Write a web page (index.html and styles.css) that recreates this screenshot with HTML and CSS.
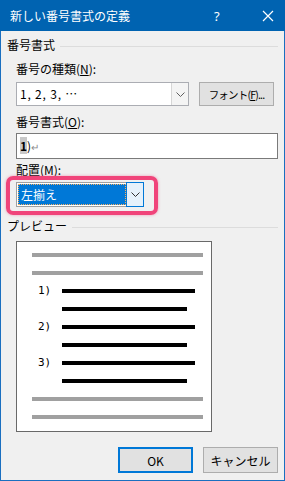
FILE: index.html
```html
<!DOCTYPE html>
<html lang="ja">
<head>
    <meta charset="UTF-8">
    <meta name="viewport" content="width=device-width, initial-scale=1.0">
    <title>新しい番号書式の定義</title>
    <link rel="stylesheet" href="styles.css">
</head>
<body>
<div class="window">
    <div class="titlebar">
        <span class="title">新しい番号書式の定義</span>
        <span class="help">?</span>
        <span class="close">
            <svg width="12" height="12" viewBox="0 0 12 12"><path d="M1 1 L11 11 M11 1 L1 11" stroke="#fff" stroke-width="1.2" fill="none"/></svg>
        </span>
    </div>

    <div class="content">
        <div class="group-head"><span>番号書式</span><i class="rule"></i></div>

        <div class="label">番号の種類(<u>N</u>):</div>
        <div class="row">
            <div class="combo">
                <span class="combo-text">1, 2, 3, …</span>
                <span class="combo-btn">
                    <svg width="9" height="5" viewBox="0 0 9 5"><path d="M0.5 0.5 L4.5 4.5 L8.5 0.5" stroke="#606060" fill="none"/></svg>
                </span>
            </div>
            <div class="button font-btn">フォント(<u>F</u>)...</div>
        </div>

        <div class="label">番号書式(<u>O</u>):</div>
        <div class="textbox"><span class="sel">1</span>)<span class="ret">↵</span></div>

        <div class="label label-tight">配置(<u>M</u>):</div>
        <div class="mark">
            <div class="combo combo-focus">
                <span class="combo-text"><span class="focus">左揃え</span></span>
                <span class="combo-btn">
                    <svg width="9" height="5" viewBox="0 0 9 5"><path d="M0.5 0.5 L4.5 4.5 L8.5 0.5" stroke="#303030" fill="none"/></svg>
                </span>
            </div>
        </div>

        <div class="group-head preview-head"><span>プレビュー</span><i class="rule"></i></div>

        <div class="preview">
            <div class="pline"><i class="bar gray"></i></div>
            <div class="pline"><i class="bar gray"></i></div>
            <div class="pline"><span class="num">1)</span><i class="bar long"></i></div>
            <div class="pline"><span class="num"></span><i class="bar short"></i></div>
            <div class="pline"><span class="num">2)</span><i class="bar long"></i></div>
            <div class="pline"><span class="num"></span><i class="bar short"></i></div>
            <div class="pline"><span class="num">3)</span><i class="bar long"></i></div>
            <div class="pline"><span class="num"></span><i class="bar short"></i></div>
            <div class="pline"><i class="bar gray"></i></div>
            <div class="pline"><i class="bar gray"></i></div>
        </div>

        <div class="footer">
            <div class="button ok">OK</div>
            <div class="button">キャンセル</div>
        </div>
    </div>
</div>
</body>
</html>
```

FILE: styles.css
```css
* {
    box-sizing: border-box;
}
body {
    margin: 0;
    font-family: "Noto Sans CJK JP", "Noto Sans", sans-serif;
    font-size: 12px;
    color: #000;
    background: #f0f0f0;
}
u {
    text-decoration: underline;
    text-underline-offset: 1px;
}
.window {
    width: 285px;
    height: 481px;
    background: #f0f0f0;
    border: 1px solid #1a6fc0;
    border-top: none;
    display: flex;
    flex-direction: column;
}
.titlebar {
    height: 31px;
    margin: 0 -1px;
    background: #0063b1;
    color: #fff;
    display: flex;
    align-items: center;
    padding-left: 10px;
}
.title {
    flex: 1;
    font-size: 12px;
    line-height: 16px;
}
.help {
    width: 16px;
    margin-right: 32px;
    font-size: 13px;
    font-family: "Noto Sans", sans-serif;
}
.close {
    width: 12px;
    height: 12px;
    margin-right: 11px;
    display: flex;
}
.content {
    flex: 1;
    padding: 0 6px 0 15px;
    display: flex;
    flex-direction: column;
}
.group-head {
    height: 16px;
    margin: 6px 0 0 -9px;
    display: flex;
    align-items: center;
    line-height: 16px;
}
.rule {
    flex: 1;
    height: 1px;
    background: #dcdcdc;
    margin-left: 5px;
    margin-top: 2px;
}
.label {
    height: 16px;
    line-height: 16px;
    margin-top: 8px;
}
.row {
    display: flex;
    margin-top: 5px;
    gap: 10px;
}
.combo {
    width: 173px;
    height: 24px;
    border: 1px solid #abadb3;
    background: #fff;
    display: flex;
}
.combo-text {
    flex: 1;
    line-height: 22px;
    padding-left: 3px;
    letter-spacing: 0.8px;
}
.combo-btn {
    width: 17px;
    border-left: 1px solid #d6d6d6;
    background: #f4f4f4;
    display: flex;
    align-items: center;
    justify-content: center;
}
.button {
    width: 75px;
    height: 24px;
    border: 1px solid #adadad;
    background: #e1e1e1;
    display: flex;
    align-items: center;
    justify-content: center;
}
.font-btn {
    font-size: 10.5px;
    letter-spacing: -0.8px;
    white-space: nowrap;
}
.textbox {
    height: 26px;
    margin-top: 3px;
    border: 1px solid #7a7a7a;
    background: #fff;
    line-height: 24px;
    padding-left: 3px;
}
.sel {
    background: #c8c8c8;
    font-weight: bold;
}
.ret {
    color: #8a8a8a;
    font-size: 10px;
}
.label-tight {
    margin-top: 3px;
}
.mark {
    width: 152px;
    height: 39px;
    margin: -2px 0 0 -10px;
    border: 4px solid #f0447a;
    border-radius: 7px;
    padding: 2px 0 0 6px;
    box-shadow: 0 0 3px rgba(240, 68, 122, 0.5);
}
.combo-focus {
    width: 128px;
    height: 25px;
    padding: 1px;
    border-color: #a0a0a0;
}
.combo-focus .combo-text {
    padding: 0;
    display: flex;
    letter-spacing: 0;
}
.focus {
    flex: 1;
    background: #0078d7;
    color: #fff;
    border: 1px dotted #f8b060;
    line-height: 19px;
    padding-left: 2px;
}
.combo-focus .combo-btn {
    border: 1px solid #0078d7;
    background: #e5f1fb;
    margin: -2px -2px -2px 0;
    width: 18px;
}
.preview-head {
    margin-top: 3px;
}
.preview {
    width: 196px;
    height: 191px;
    margin-top: 7px;
    background: #fff;
    border: 1px solid #696969;
    padding: 4px 0 0 0;
}
.pline {
    height: 18px;
    display: flex;
    align-items: center;
}
.num {
    width: 45px;
    padding-left: 21px;
    font-size: 11px;
    font-family: "DejaVu Sans Mono", monospace;
    line-height: 12px;
}
.bar {
    height: 4px;
    background: #000;
}
.gray {
    background: #a0a0a0;
    width: 171px;
    margin-left: 15px;
}
.long {
    width: 133px;
}
.short {
    width: 125px;
}
.footer {
    display: flex;
    justify-content: flex-end;
    gap: 10px;
    margin-top: 15px;
}
.footer .button {
    height: 26px;
}
.ok {
    border: 2px solid #0078d7;
}
```
